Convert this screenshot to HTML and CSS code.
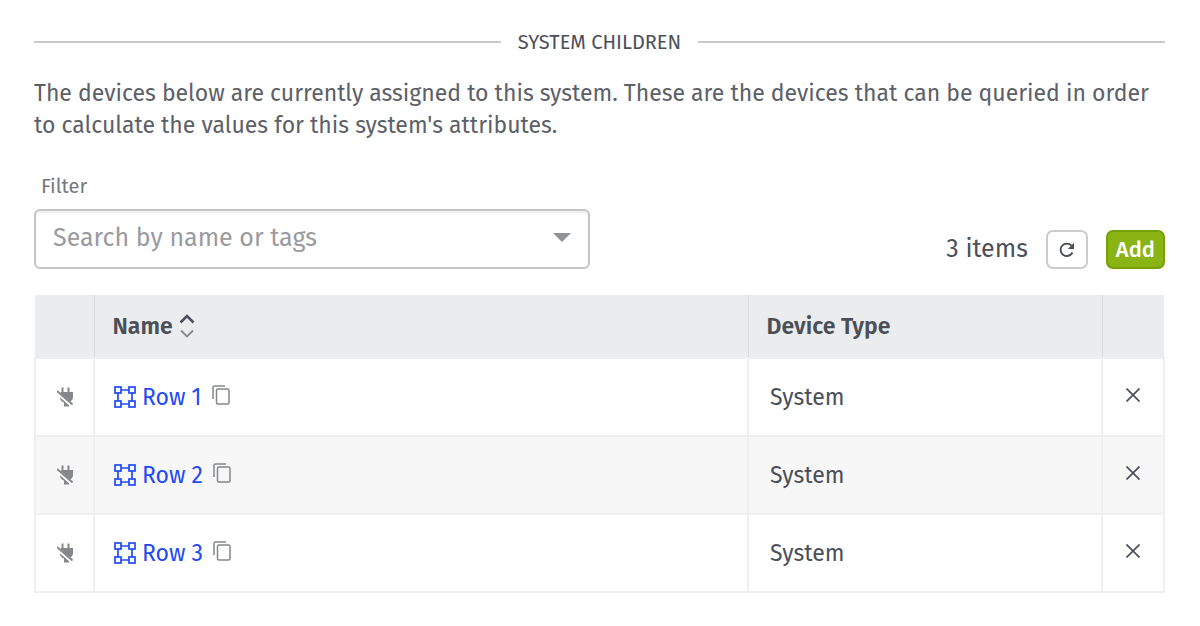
FILE: index.html
```html
<!DOCTYPE html>
<html lang="en">
<head>
    <meta charset="UTF-8">
    <meta name="viewport" content="width=device-width, initial-scale=1.0">
    <title>System Children</title>
    <link rel="stylesheet" href="styles.css">
</head>
<body>
    <!-- shared icons -->
    <svg class="sprite" aria-hidden="true">
        <symbol id="icon-unplugged" viewBox="0 0 16 20">
            <path d="M5.500 0.500v5M11.500 0.500v5" stroke="currentColor" stroke-width="2"/>
            <path d="M4 5h12v5q0 3.500-4 5v4.500H7V15.500q-4-1.500-4-5z" fill="currentColor"/>
            <path d="M-1 4.500L15 18.500" stroke="#fff" stroke-width="3.600"/>
            <path d="M0 4L15.500 17.500" stroke="currentColor" stroke-width="2"/>
        </symbol>
        <symbol id="icon-system" viewBox="0 0 22 22">
            <g fill="none" stroke="currentColor" stroke-width="1.700">
                <rect x="1" y="1" width="6" height="6"/>
                <rect x="15" y="1" width="6" height="6"/>
                <rect x="1" y="15" width="6" height="6"/>
                <rect x="15" y="15" width="6" height="6"/>
                <path d="M7 4h8M7 18h8M4 7v8M18 7v8"/>
            </g>
        </symbol>
        <symbol id="icon-copy" viewBox="0 0 18 20">
            <g fill="none" stroke="currentColor" stroke-width="1.500">
                <path d="M1 14V2.500Q1 1 2.500 1H13"/>
                <rect x="4.500" y="4" width="12.500" height="15" rx="1.500"/>
            </g>
        </symbol>
        <symbol id="icon-remove" viewBox="0 0 14 14">
            <path d="M0.500 0.500l13 13M13.500 0.500l-13 13" stroke="currentColor" stroke-width="1.700"/>
        </symbol>
    </svg>

    <div class="container">
        <h2 class="section-title">SYSTEM CHILDREN</h2>
        <p class="description">The devices below are currently assigned to this system. These are the devices that can be queried in order to calculate the values for this system's attributes.</p>

        <div class="toolbar">
            <div class="filter">
                <label for="filter">Filter</label>
                <div class="filter-box">
                    <input type="text" id="filter" name="filter" placeholder="Search by name or tags">
                    <svg class="arrow" viewBox="0 0 18 9" aria-hidden="true"><path d="M0 0h18l-9 9z" fill="currentColor"/></svg>
                </div>
            </div>
            <div class="actions">
                <span class="count">3 items</span>
                <button type="button" class="button refresh" aria-label="Refresh">
                    <svg viewBox="0 0 16 16" width="16" height="16"><path d="M13.400 10.500A6.200 6.200 0 1 1 12.500 3.700" fill="none" stroke="currentColor" stroke-width="1.900"/><path d="M15 0.800v6.200H8.800z" fill="currentColor"/></svg>
                </button>
                <button type="button" class="button add">Add</button>
            </div>
        </div>

        <table class="devices">
            <thead>
                <tr>
                    <th class="col-status"></th>
                    <th class="col-name">
                        <button type="button" class="sort">Name
                            <svg viewBox="0 0 16 24" width="16" height="24" fill="none" aria-hidden="true"><path d="M1.500 8.500L8 2l6.500 6.500" stroke="#4b4f58" stroke-width="2.500"/><path d="M2 16.500l6 6 6-6" stroke="#85878b" stroke-width="1.800"/></svg>
                        </button>
                    </th>
                    <th class="col-type">Device Type</th>
                    <th class="col-remove"></th>
                </tr>
            </thead>
            <tbody>
                <tr>
                    <td class="status"><svg width="16" height="20"><use href="#icon-unplugged"/></svg></td>
                    <td>
                        <div class="device">
                            <a href="#"><svg width="22" height="22"><use href="#icon-system"/></svg>Row 1</a>
                            <button type="button" class="icon-button copy" aria-label="Copy"><svg width="18" height="20"><use href="#icon-copy"/></svg></button>
                        </div>
                    </td>
                    <td class="type">System</td>
                    <td class="remove"><button type="button" class="icon-button" aria-label="Remove"><svg width="14" height="14"><use href="#icon-remove"/></svg></button></td>
                </tr>
                <tr>
                    <td class="status"><svg width="16" height="20"><use href="#icon-unplugged"/></svg></td>
                    <td>
                        <div class="device">
                            <a href="#"><svg width="22" height="22"><use href="#icon-system"/></svg>Row 2</a>
                            <button type="button" class="icon-button copy" aria-label="Copy"><svg width="18" height="20"><use href="#icon-copy"/></svg></button>
                        </div>
                    </td>
                    <td class="type">System</td>
                    <td class="remove"><button type="button" class="icon-button" aria-label="Remove"><svg width="14" height="14"><use href="#icon-remove"/></svg></button></td>
                </tr>
                <tr>
                    <td class="status"><svg width="16" height="20"><use href="#icon-unplugged"/></svg></td>
                    <td>
                        <div class="device">
                            <a href="#"><svg width="22" height="22"><use href="#icon-system"/></svg>Row 3</a>
                            <button type="button" class="icon-button copy" aria-label="Copy"><svg width="18" height="20"><use href="#icon-copy"/></svg></button>
                        </div>
                    </td>
                    <td class="type">System</td>
                    <td class="remove"><button type="button" class="icon-button" aria-label="Remove"><svg width="14" height="14"><use href="#icon-remove"/></svg></button></td>
                </tr>
            </tbody>
        </table>
    </div>
</body>
</html>
```

FILE: styles.css
```css
* {
    box-sizing: border-box;
}
body {
    margin: 0;
    background-color: #fff;
    color: #4b4f58;
    font-family: "Fira Sans", "Noto Sans", sans-serif;
    font-size: 23px;
    line-height: 32px;
}
button, input {
    font-family: inherit;
    color: inherit;
}
svg {
    display: block;
    flex: none;
}
.sprite {
    position: absolute;
    width: 0;
    height: 0;
}
.container {
    padding: 26px 35px 34px 34px;
}
.section-title {
    display: flex;
    align-items: center;
    gap: 17px;
    margin: 0 0 19px;
    font-size: 20px;
    font-weight: 400;
}
.section-title::before,
.section-title::after {
    content: "";
    flex: 1;
    height: 2px;
    background-color: #c9cacc;
}
.description {
    margin: 0;
    color: #5c6067;
}
.toolbar {
    display: flex;
    justify-content: space-between;
    align-items: flex-end;
    margin-top: 29px;
}
.filter {
    width: 556px;
}
.filter label {
    display: block;
    padding-left: 7px;
    margin-bottom: 7px;
    font-size: 20px;
    color: #74777d;
}
.filter-box {
    position: relative;
}
.filter-box input {
    display: block;
    width: 100%;
    height: 60px;
    padding: 0 50px 2px 17px;
    border: 2px solid #c3c5c8;
    border-radius: 6px;
    background-color: #fff;
    box-shadow: inset 0 2px 2px #f1f1f2;
    font-size: 25px;
}
.filter-box input::placeholder {
    color: #999b9f;
    opacity: 1;
}
.arrow {
    position: absolute;
    top: 24px;
    right: 19px;
    width: 18px;
    height: 9px;
    color: #929397;
}
.actions {
    display: flex;
    align-items: center;
}
.count {
    margin-right: 18px;
    padding-bottom: 2px;
    font-size: 25px;
}
.button {
    display: flex;
    align-items: center;
    justify-content: center;
    height: 39px;
    padding: 0 8px;
    border: 2px solid #cbccce;
    border-radius: 7px;
    background-color: #fff;
    cursor: pointer;
    font-size: 22px;
    font-weight: 500;
}
.refresh {
    width: 42px;
    margin-right: 18px;
}
.add {
    border-color: #75a006;
    background-color: #8ab414;
    color: #fff;
}
.devices {
    width: 100%;
    margin-top: 26px;
    border-collapse: collapse;
    table-layout: fixed;
}
.devices th {
    height: 63px;
    padding: 0 18px;
    border-left: 1px solid #d8dadd;
    background-color: #ebecee;
    font-weight: 600;
    text-align: left;
}
.devices th:first-child {
    border-left-color: #ebecee;
}
.devices td {
    height: 78px;
    padding: 0 19px;
    border: 2px solid #eeeff0;
}
.devices tbody tr:nth-child(even) {
    background-color: #f7f7f7;
}
.col-status {
    width: 59px;
}
.col-type {
    width: 354px;
}
.col-remove {
    width: 62px;
}
.sort {
    display: flex;
    align-items: center;
    gap: 6px;
    padding: 0;
    border: none;
    background: none;
    font-size: 23px;
    font-weight: 600;
    cursor: pointer;
}
.devices .type {
    padding-left: 21px;
}
.device {
    display: flex;
    align-items: center;
}
.device a {
    display: flex;
    align-items: center;
    gap: 6px;
    color: #1f4bf5;
    text-decoration: none;
}
.device a:hover {
    text-decoration: underline;
}
.icon-button {
    padding: 0;
    border: none;
    background: none;
    cursor: pointer;
}
.copy {
    margin-left: 10px;
    padding-bottom: 4px;
    color: #85878b;
}
.status {
    color: #85878b;
}
.status svg {
    margin-left: 2px;
}
.devices .remove {
    padding: 0 0 5px;
}
.remove .icon-button {
    display: block;
    margin: 0 auto;
}
```
